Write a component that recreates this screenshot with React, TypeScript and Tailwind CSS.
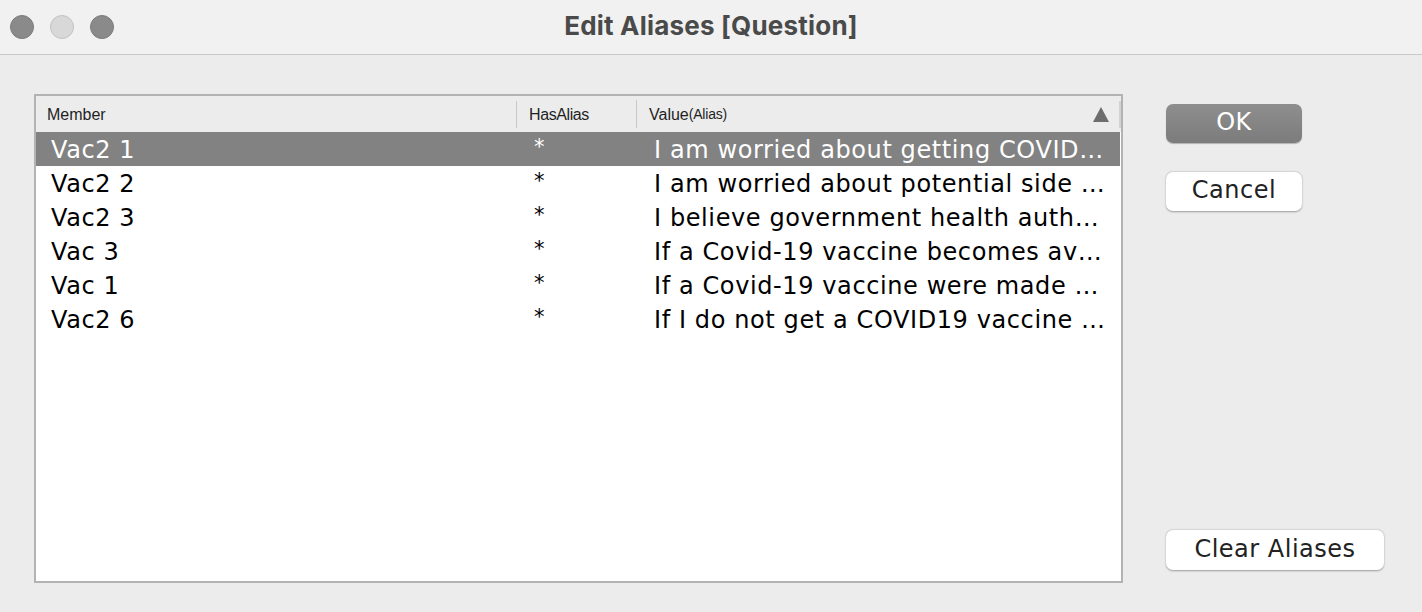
import React from 'react';

// values are shown truncated, as in the source dialog
const rows = [
  { member: 'Vac2 1', alias: '*', value: 'I am worried about getting COVID…' },
  { member: 'Vac2 2', alias: '*', value: 'I am worried about potential side …' },
  { member: 'Vac2 3', alias: '*', value: 'I believe government health auth…' },
  { member: 'Vac 3', alias: '*', value: 'If a Covid-19 vaccine becomes av…' },
  { member: 'Vac 1', alias: '*', value: 'If a Covid-19 vaccine were made …' },
  { member: 'Vac2 6', alias: '*', value: 'If I do not get a COVID19 vaccine …' },
];

const rowFont = { fontFamily: '"DejaVu Sans", "Noto Sans", sans-serif' };

export default function App() {
  return (
    <div className="w-[1422px] h-[612px] bg-[#ececec] flex flex-col overflow-hidden">
      {/* Title bar */}
      <div className="h-[55px] bg-[#f1f1f1] border-b border-[#c9c9c9] grid grid-cols-[1fr_auto_1fr] items-center">
        <div className="flex items-center gap-[16px] pl-[10px]">
          <span className="w-[24px] h-[24px] rounded-full bg-[#8a8a8a] border border-[#7b7b7b]" />
          <span className="w-[24px] h-[24px] rounded-full bg-[#d8d8d8] border border-[#c2c2c2]" />
          <span className="w-[24px] h-[24px] rounded-full bg-[#8a8a8a] border border-[#7b7b7b]" />
        </div>
        <div
          className="text-[26px] font-bold text-[#4a4a4a] pb-[3px] tracking-[0.2px]"
          style={{ fontFamily: 'Inter, "Liberation Sans", sans-serif' }}
        >
          Edit Aliases [Question]
        </div>
        <div />
      </div>

      {/* Body */}
      <div className="flex pl-[34px] pt-[39px]">
        {/* Table */}
        <div className="w-[1089px] h-[489px] border-2 border-[#b3b3b3] bg-white flex flex-col">
          <div
            className="h-[36px] bg-[#ececec] grid grid-cols-[480px_120px_1fr] items-center text-[16px] text-[#1f1f1f]"
            style={{ fontFamily: '"Liberation Sans", Arial, sans-serif' }}
          >
            <div className="pl-[11px] pt-[1px]">Member</div>
            <div className="h-[27px] border-l border-[#c8c8c8] flex items-center pl-[12px] pt-[1px] tracking-[-0.4px]">
              HasAlias
            </div>
            <div className="h-[28px] border-l border-[#c8c8c8] flex items-center pl-[12px] pt-[1px]">
              <span>Value</span>
              <span className="text-[14px] tracking-[-0.2px]">(Alias)</span>
              <div className="ml-auto flex items-center gap-[10px] h-full">
                <svg width="16" height="15" viewBox="0 0 16 15">
                  <polygon points="8,0 16,15 0,15" fill="#6d6d6d" />
                </svg>
                <span className="w-[2px] h-full bg-[#d2d2d2]" />
              </div>
            </div>
          </div>

          {rows.map((r, i) => (
            <div
              key={r.member}
              className={`h-[34px] grid grid-cols-[480px_120px_1fr] items-center text-[24px] tracking-[0.6px] ${
                i === 0 ? 'bg-[#828282] text-white mr-[1px]' : 'text-black'
              }`}
              style={rowFont}
            >
              <div className="pl-[15px] pb-[4px]">{r.member}</div>
              <div className="pl-[18px] pb-[8px] text-[21px]">{r.alias}</div>
              <div className="pl-[18px] pr-[8px] pb-[4px] whitespace-nowrap overflow-hidden">
                {r.value}
              </div>
            </div>
          ))}
        </div>

        {/* Buttons */}
        <div
          className="ml-[43px] mt-[10px] h-[466px] w-[218px] flex flex-col items-start text-[24px] tracking-[0.5px]"
          style={rowFont}
        >
          <button className="w-[136px] h-[39px] rounded-[7px] bg-gradient-to-b from-[#8e8e8e] to-[#7c7c7c] text-white shadow-[0_1px_1px_rgba(0,0,0,0.25)] pb-[3px]">
            OK
          </button>
          <button className="mt-[29px] w-[136px] h-[39px] rounded-[7px] bg-white text-[#222] shadow-[0_0.5px_2px_rgba(0,0,0,0.35)] pb-[3px]">
            Cancel
          </button>
          <div className="flex-1" />
          <button className="w-[218px] h-[40px] rounded-[7px] bg-white text-[#222] shadow-[0_0.5px_2px_rgba(0,0,0,0.35)] pb-[3px]">
            Clear Aliases
          </button>
        </div>
      </div>
    </div>
  );
}
